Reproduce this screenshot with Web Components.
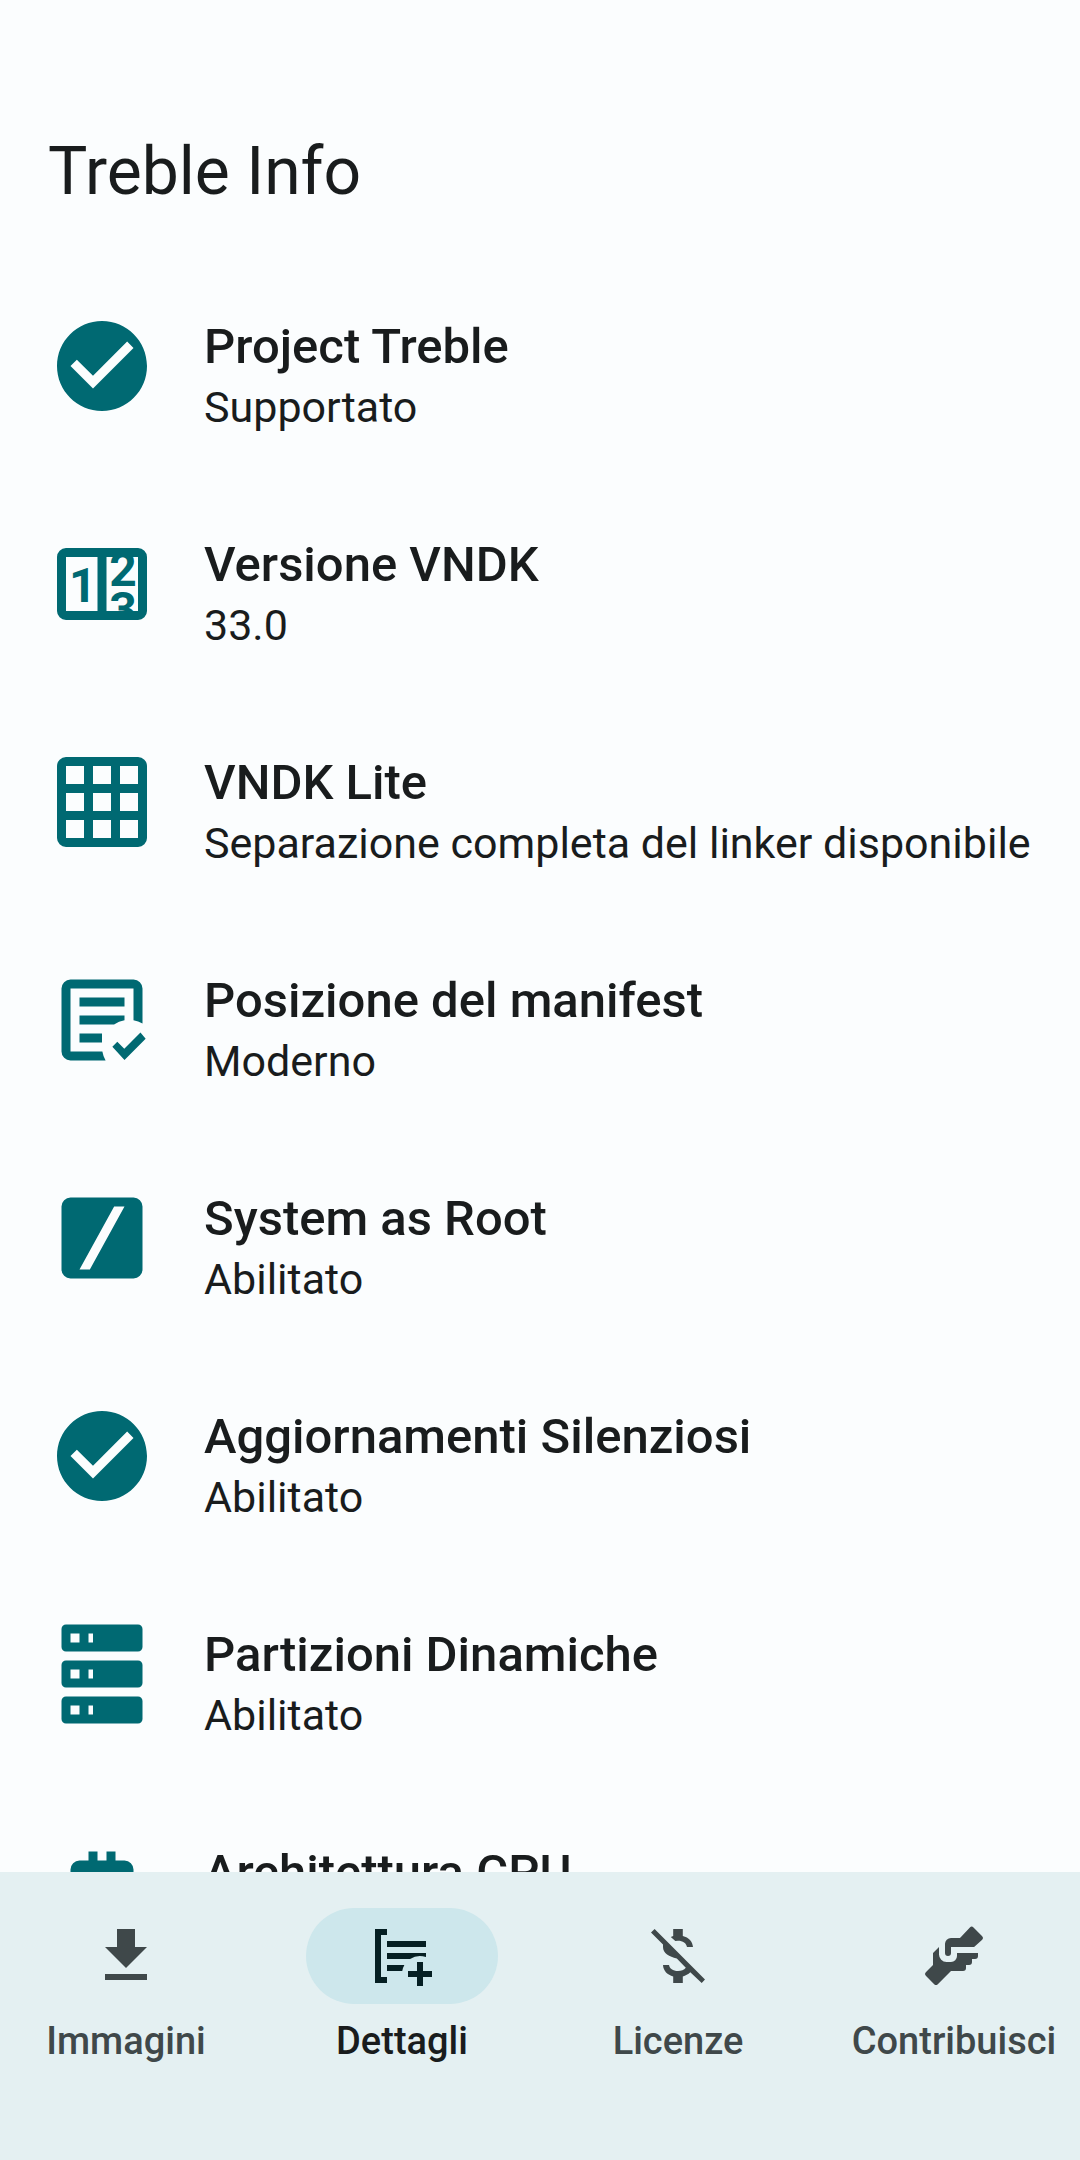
<!DOCTYPE html>
<html lang="it">
<head>
<meta charset="utf-8">
<meta name="viewport" content="width=device-width, initial-scale=1">
<title>Treble Info</title>
<style>
  :root {
    --surface: #fbfdfe;
    --on-surface: #191c1d;
    --primary: #006972;
    --bar: #e4f0f2;
    --pill: #cde7ec;
    --on-pill: #051f23;
    --muted: #3f484a;
  }
  body {
    margin: 0;
    background: var(--surface);
    color: var(--on-surface);
    font-family: Roboto, "Noto Sans", sans-serif;
  }
</style>
</head>
<body>
<app-shell>
  <app-header slot="header">Treble Info</app-header>
  <info-row icon="check">Project Treble<span slot="value">Supportato</span></info-row>
  <info-row icon="counter">Versione VNDK<span slot="value">33.0</span></info-row>
  <info-row icon="grid">VNDK Lite<span slot="value">Separazione completa del linker disponibile</span></info-row>
  <info-row icon="manifest">Posizione del manifest<span slot="value">Moderno</span></info-row>
  <info-row icon="slash">System as Root<span slot="value">Abilitato</span></info-row>
  <info-row icon="check">Aggiornamenti Silenziosi<span slot="value">Abilitato</span></info-row>
  <info-row icon="storage">Partizioni Dinamiche<span slot="value">Abilitato</span></info-row>
  <info-row icon="chip">Architettura CPU</info-row>
  <nav-bar slot="footer">
    <nav-item icon="download" target="#immagini">Immagini</nav-item>
    <nav-item icon="details" target="#dettagli" active>Dettagli</nav-item>
    <nav-item icon="moneyoff" target="#licenze">Licenze</nav-item>
    <nav-item icon="hands" target="#contribuisci">Contribuisci</nav-item>
  </nav-bar>
</app-shell>

<script>
const ICONS = {
  check: '<path d="M12 2C6.48 2 2 6.48 2 12s4.48 10 10 10 10-4.48 10-10S17.52 2 12 2zm-2 15l-5-5 1.41-1.41L10 14.17l7.59-7.59L19 8l-9 9z"/>',
  counter: '<path fill-rule="evenodd" d="M4 4h16a2 2 0 0 1 2 2v12a2 2 0 0 1-2 2H4a2 2 0 0 1-2-2V6a2 2 0 0 1 2-2zM4 6v12h7V6zM13 6v12h7V6z"/>' +
    '<svg x="0" y="6" width="24" height="12" viewBox="0 27 108 54" font-family="Roboto, sans-serif" font-size="48" font-weight="700">' +
    '<text x="21" y="72">1</text><text x="75" y="56" text-anchor="middle">2</text><text x="75" y="96" text-anchor="middle">3</text></svg>',
  grid: '<path fill-rule="evenodd" d="M4 2h16a2 2 0 0 1 2 2v16a2 2 0 0 1-2 2H4a2 2 0 0 1-2-2V4a2 2 0 0 1 2-2zM4 4v4h4V4zM10 4v4h4V4zM16 4v4h4V4zM4 10v4h4v-4zM10 10v4h4v-4zM16 10v4h4v-4zM4 16v4h4v-4zM10 16v4h4v-4zM16 16v4h4v-4z"/>',
  manifest: '<path d="M5 3h14a2 2 0 0 1 2 2v7.8a6 6 0 0 0-2-.72V5H5v14h7.08a6 6 0 0 0 .72 2H5a2 2 0 0 1-2-2V5a2 2 0 0 1 2-2z"/>' +
    '<path d="M7 7h10v2H7zM7 11h10v1.08A6 6 0 0 0 14.68 13H7zM7 15h5v2H7z"/><path d="M14.3 17.95l1.1-1.1 1.55 1.55 3.6-3.6 1.15 1.35L17 20.9z"/>',
  slash: '<path fill-rule="evenodd" d="M5 3h14a2 2 0 0 1 2 2v14a2 2 0 0 1-2 2H5a2 2 0 0 1-2-2V5a2 2 0 0 1 2-2zM14.7 5L7 19h2.3L17 5z"/>',
  storage: [1, 9, 17].map(y => `<path fill-rule="evenodd" d="M4 ${y}h16a1 1 0 0 1 1 1v4a1 1 0 0 1-1 1H4a1 1 0 0 1-1-1v-4a1 1 0 0 1 1-1zM5 ${y + 2}v2h2v-2zM9 ${y + 2}v2h1v-2z"/>`).join(''),
  chip: '<path fill-rule="evenodd" d="M9 3h2v2h2V3h2v2h2a2 2 0 0 1 2 2v2h2v2h-2v2h2v2h-2v2a2 2 0 0 1-2 2h-2v2h-2v-2h-2v2H9v-2H7a2 2 0 0 1-2-2v-2H3v-2h2v-2H3V9h2V7a2 2 0 0 1 2-2h2zM9 9v6h6V9z"/>',
  download: '<path d="M5 20h14v-2H5v2zM19 9h-4V3H9v6H5l7 7 7-7z"/>',
  details: '<path d="M7 3H3v18h4v-2H5V5h2zM7 7h13v2H7zM7 11h13v1.350A6 6 0 0 0 14.680 13H7zM7 15h5.800a6 6 0 0 0-.720 2H7zM17 14h2v3h3v2h-3v3h-2v-3h-3v-2h3z"/>',
  moneyoff: '<path d="M4.200 3L3 4.200 7 8.200V9c0 2.200 2.100 3.200 4.600 3.800l3 3.100c-.6.7-1.500 1.100-2.600 1.100-1.700 0-2.800-.8-3-2H7c.1 2 1.500 3.300 3.400 3.800V21h3.200v-2.200c.9-.3 1.800-.7 2.500-1.400L19.900 21l1.100-1.200z"/>' +
    '<path d="M10.400 3h3.200v2.300C15.600 5.800 16.900 7.200 17 9h-2c-.2-1.300-1.400-2.100-3-2.100l-.9.1-1.500-1.300.8-.4z"/>',
  hands: '<path d="M17.300 2.500q.6-.6 1.200 0l2.900 2.900q.6.6 0 1.200L18.700 9H11v2a1 1 0 0 1-2 0V8a2 2 0 0 1 2-2h3z"/>' +
    '<path d="M7 9v2.500A2.500 2.500 0 0 0 9.500 14H11a2 2 0 0 0 2-2v-1h7v1a1 1 0 0 1-1 1h-1v1a1 1 0 0 1-1 1h-1v1a1 1 0 0 1-1 1h-4l-4.400 4.400q-.6.6-1.200 0l-2.800-2.800q-.6-.6 0-1.200L5 15v-4z"/>'
};

function define(name, html, setup) {
  const template = document.createElement('template');
  template.innerHTML = html;
  customElements.define(name, class extends HTMLElement {
    constructor() {
      super();
      this.attachShadow({ mode: 'open' }).append(template.content.cloneNode(true));
    }
    connectedCallback() {
      if (setup) setup(this, this.shadowRoot);
    }
  });
}

define('vector-icon', `
  <style>
    :host { display: block; flex: none; width: var(--icon-size); height: var(--icon-size); }
    .frame { display: block; width: 100%; height: 100%; fill: currentColor; }
  </style>
  <svg class="frame" viewBox="0 0 24 24" aria-hidden="true"></svg>
`, (host, root) => {
  root.querySelector('.frame').innerHTML = ICONS[host.getAttribute('name')];
});

define('app-shell', `
  <style>
    :host { display: flex; flex-direction: column; height: 100vh; }
    main { flex: 1; min-height: 0; overflow-y: auto; scrollbar-width: none; }
  </style>
  <main><slot name="header"></slot><slot></slot></main>
  <slot name="footer"></slot>
`);

define('app-header', `
  <style>
    :host { display: block; padding: 133px 48px 53px; }
    h1 { margin: 0; font-size: 66px; line-height: 78px; font-weight: 400; }
  </style>
  <h1><slot></slot></h1>
`);

define('info-row', `
  <style>
    :host { display: flex; align-items: flex-start; gap: 48px; padding: 48px 0 50px 48px; }
    vector-icon { --icon-size: 108px; color: var(--primary); }
    div { display: flex; flex-direction: column; gap: 8px; padding-top: 7px; }
    h2, p { margin: 0; }
    h2 { font-size: 49px; line-height: 56px; font-weight: 500; }
    p { font-size: 43px; line-height: 49px; }
  </style>
  <vector-icon></vector-icon>
  <div><h2><slot></slot></h2><p><slot name="value"></slot></p></div>
`, (host, root) => {
  const icon = document.createElement('vector-icon');
  icon.setAttribute('name', host.getAttribute('icon'));
  root.querySelector('vector-icon').replaceWith(icon);
});

define('nav-bar', `
  <style>
    :host { display: block; flex: none; background: var(--bar); }
    nav { display: flex; gap: 24px; padding: 36px 0 94px; }
  </style>
  <nav><slot></slot></nav>
`);

define('nav-item', `
  <style>
    :host { display: block; flex: 1 1 0; min-width: 0; }
    a { display: flex; flex-direction: column; align-items: center; gap: 12px; color: var(--muted);
        text-decoration: none; font-size: 38px; line-height: 50px; font-weight: 500; }
    .pill { display: flex; padding: 12px 60px; border-radius: 48px; }
    vector-icon { --icon-size: 72px; }
    :host([active]) a { color: var(--on-surface); }
    :host([active]) .pill { background: var(--pill); color: var(--on-pill); }
  </style>
  <a><span class="pill"></span><span><slot></slot></span></a>
`, (host, root) => {
  const icon = document.createElement('vector-icon');
  icon.setAttribute('name', host.getAttribute('icon'));
  root.querySelector('.pill').replaceChildren(icon);
  const link = root.querySelector('a');
  link.href = host.getAttribute('target');
  if (host.hasAttribute('active')) link.setAttribute('aria-current', 'page');
});
</script>
</body>
</html>
